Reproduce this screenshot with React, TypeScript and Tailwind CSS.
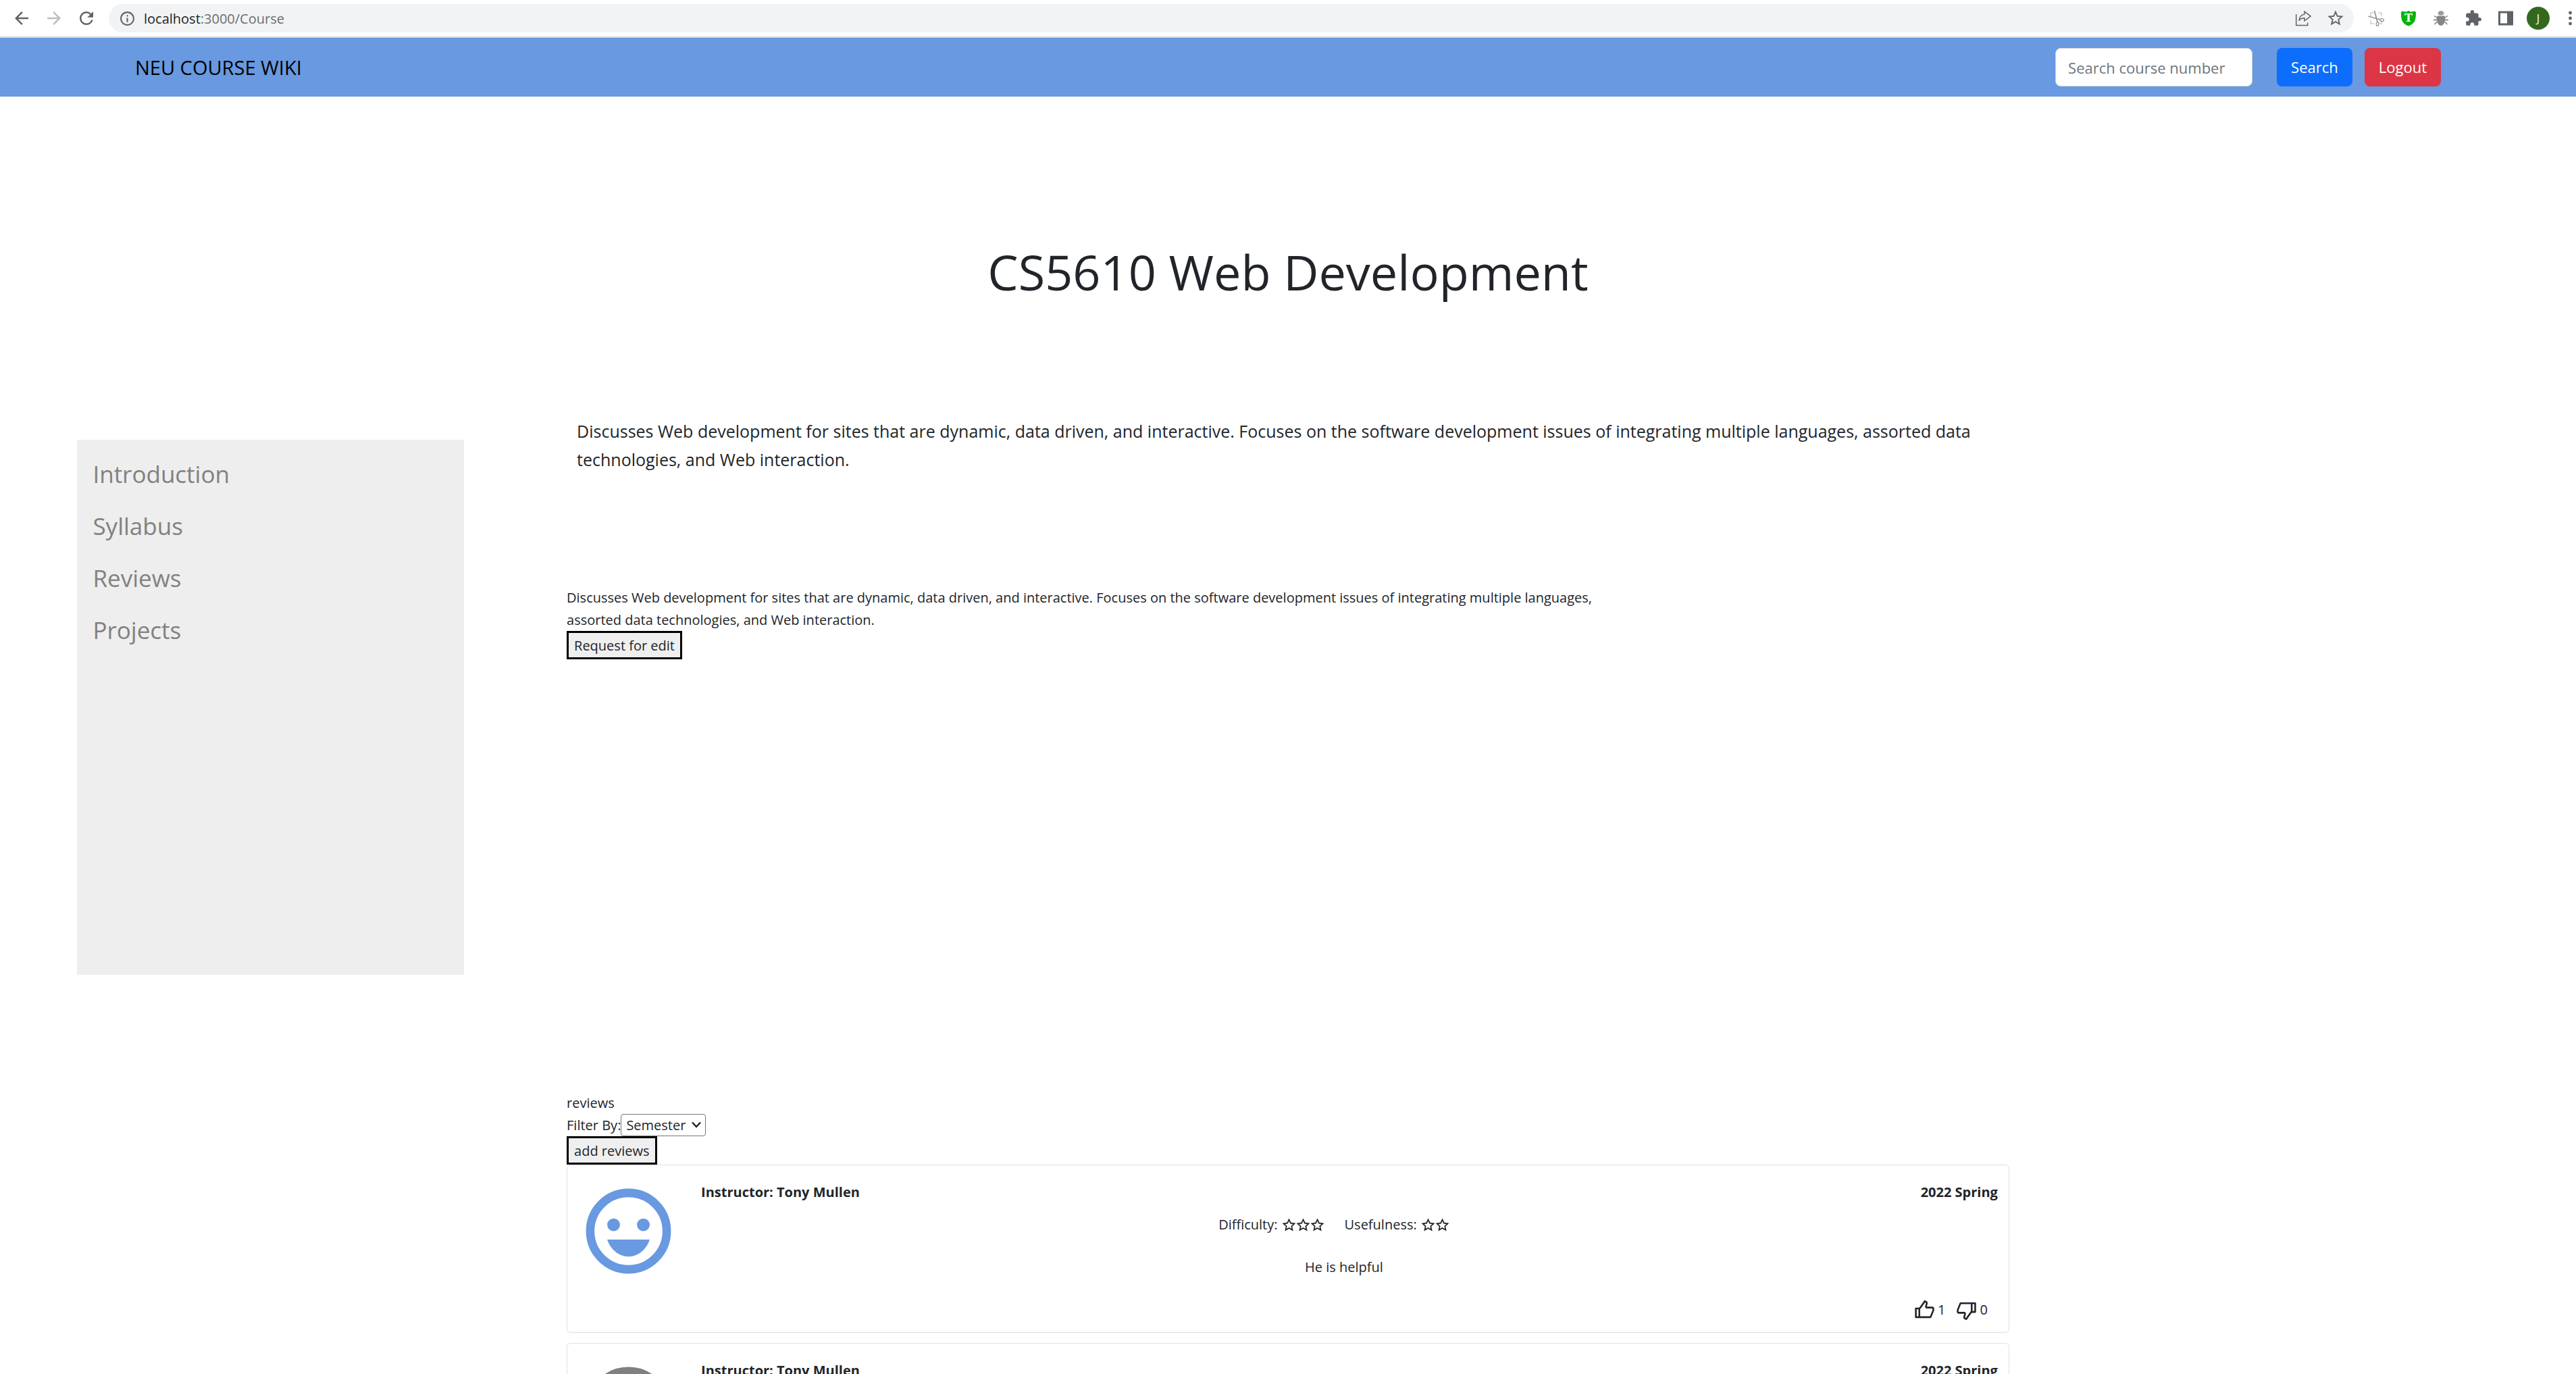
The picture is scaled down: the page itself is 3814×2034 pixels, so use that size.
import type { ReactNode } from "react";
import { MdArrowBack, MdArrowForward, MdExtension, MdInfoOutline, MdRefresh, MdStarBorder } from "react-icons/md";
import { RiStarLine, RiThumbDownLine, RiThumbUpLine } from "react-icons/ri";

type Review = {
  instructor: string;
  semester: string;
  difficulty: number;
  usefulness: number;
  comment: string;
  likes: number;
  dislikes: number;
  faceClass: string;
};

const reviews: Review[] = [
  {
    instructor: "Tony Mullen",
    semester: "2022 Spring",
    difficulty: 3,
    usefulness: 2,
    comment: "He is helpful",
    likes: 1,
    dislikes: 0,
    faceClass: "text-[#6899e1]",
  },
  {
    instructor: "Tony Mullen",
    semester: "2022 Spring",
    difficulty: 3,
    usefulness: 2,
    comment: "He is helpful",
    likes: 0,
    dislikes: 0,
    faceClass: "text-[#808080]",
  },
];

const sections = ["Introduction", "Syllabus", "Reviews", "Projects"];

const description =
  "Discusses Web development for sites that are dynamic, data driven, and interactive. Focuses on the software development issues of integrating multiple languages, assorted data technologies, and Web interaction.";

function ToolButton({ label, children }: { label: string; children: ReactNode }) {
  return (
    <button type="button" aria-label={label} className="flex size-[30px] shrink-0 items-center justify-center">
      {children}
    </button>
  );
}

function ShareIcon() {
  return (
    <svg viewBox="0 0 24 24" className="size-6" fill="none" stroke="currentColor" strokeWidth="1.5">
      <path d="M1.700 6v16.500h17v-4" />
      <path d="M14 2.200 23 9l-9 6.800v-4c-3.600 0-6.400 1-8.200 3.700.6-5 3.700-8.600 8.200-9.400z" />
    </svg>
  );
}

function ScissorsIcon() {
  return (
    <svg viewBox="0 0 24 24" className="size-6" fill="none">
      <path d="M4 9V4h5M15 4h5v5M20 15v5h-5M9 20H4v-5" stroke="#cfcfcf" strokeWidth="1.6" />
      <path d="M.5 9 18 14M9.500.8 14 17.500" stroke="#999" strokeWidth="1.8" />
      <ellipse cx="20.500" cy="14.600" rx="2.900" ry="2" stroke="#999" strokeWidth="1.4" transform="rotate(15 20.500 14.600)" />
      <ellipse cx="14" cy="20.500" rx="1.800" ry="2.800" stroke="#999" strokeWidth="1.4" />
    </svg>
  );
}

function ShieldIcon() {
  return (
    <svg viewBox="0 0 24 24" className="size-6">
      <path d="M12 .6c1 1.300 2 1.800 4 1.800 2.500 0 4-.4 5-1.400.4 1 1.200 1.500 2 1.700C23 13 22.500 19.500 12 23.600 1.500 19.500 1 13 1 2.700c.8-.2 1.600-.7 2-1.700 1 1 2.500 1.400 5 1.400 2 0 3-.5 4-1.800z" fill="#08b30d" />
      <text x="12" y="16.500" textAnchor="middle" fontFamily="DejaVu Serif, serif" fontWeight="700" fontSize="16" fill="#fff">
        T
      </text>
    </svg>
  );
}

function BugIcon() {
  return (
    <svg viewBox="0 0 24 24" className="size-6">
      <path d="M6 11 2 8.500M6 14.500H1M6 17.500 2.500 21M18 11l4-2.500M18 14.500h5M18 17.500l3.500 3.500" stroke="#777" strokeWidth="1.300" fill="none" />
      <path d="M7.500 5.500a4.500 4.500 0 0 1 9 0L14.500 7.500h-5z" fill="#9a9a9a" />
      <path d="M6.500 8.500h11c1.500 3 1.500 13.500-5.500 14.500-7-1-7-11.500-5.500-14.500z" fill="#858585" />
    </svg>
  );
}

function SidePanelIcon() {
  return (
    <svg viewBox="0 0 24 24" className="size-6">
      <path d="M1 1.500h22v21H1z" fill="#5f6368" />
      <path d="M4 4.500h10v15H4z" fill="#fff" />
    </svg>
  );
}

function BrowserBar() {
  return (
    <div className="flex h-14 items-center gap-[18px] border-b-2 border-[#d5d8dc] bg-white pl-[17px] text-[#5f6368]">
      <ToolButton label="Back">
        <MdArrowBack className="size-[30px]" />
      </ToolButton>
      <button type="button" disabled aria-label="Forward" className="flex size-[30px] shrink-0 items-center justify-center text-[#bcbec1]">
        <MdArrowForward className="size-[30px]" />
      </button>
      <ToolButton label="Reload">
        <MdRefresh className="size-[30px]" />
      </ToolButton>
      <div className="flex h-[42px] min-w-0 flex-1 items-center gap-[18px] rounded-full bg-[#f1f3f4] pr-3 pl-[15px]">
        <MdInfoOutline className="-mr-1.5 size-[25px] shrink-0" />
        <p className="flex-1 text-[20px] text-[#6b6e72]">
          <span className="text-[#202124]">localhost</span>:3000/Course
        </p>
        <ToolButton label="Share">
          <ShareIcon />
        </ToolButton>
        <ToolButton label="Bookmark">
          <MdStarBorder className="size-[28px]" />
        </ToolButton>
      </div>
      <ToolButton label="Screenshot">
        <ScissorsIcon />
      </ToolButton>
      <ToolButton label="Shield">
        <ShieldIcon />
      </ToolButton>
      <ToolButton label="Debugger">
        <BugIcon />
      </ToolButton>
      <ToolButton label="Extensions">
        <MdExtension className="size-[26px]" />
      </ToolButton>
      <ToolButton label="Side panel">
        <SidePanelIcon />
      </ToolButton>
      <div className="-ml-0.5 flex shrink-0 items-center gap-4">
        <button type="button" className="size-[34px] rounded-full bg-[#33691e] text-[16px] text-white">
          J
        </button>
        <button type="button" aria-label="Menu">
          <svg viewBox="0 0 23 30" className="h-[30px] w-[23px]" fill="currentColor">
            <circle cx="14.500" cy="7" r="2.400" />
            <circle cx="14.500" cy="15" r="2.400" />
            <circle cx="14.500" cy="23" r="2.400" />
          </svg>
        </button>
      </div>
    </div>
  );
}

function NavBar() {
  return (
    <header className="flex items-center bg-[#6899e1] px-[200px] py-[15px]">
      <a href="#home" className="mr-auto text-[29px] text-black">
        NEU COURSE WIKI
      </a>
      <form className="flex text-[22px]" onSubmit={(e) => e.preventDefault()}>
        <input
          type="text"
          aria-label="Search course number"
          placeholder="Search course number"
          className="mr-9 h-[57px] w-[292px] rounded-lg border border-[#ced4da] bg-white px-[18px] placeholder:text-[#6c757d]"
        />
        <button type="submit" className="mr-[18px] h-[57px] rounded-lg bg-[#0d6efd] px-[21px] text-white">
          Search
        </button>
        <button type="button" className="h-[57px] rounded-lg bg-[#dc3545] px-[21px] text-white">
          Logout
        </button>
      </form>
    </header>
  );
}

function Face({ className }: { className: string }) {
  return (
    <svg viewBox="0 0 24 24" className={`size-[151px] shrink-0 ${className}`} fill="currentColor" aria-hidden="true">
      <circle cx="12" cy="12" r="9" fill="none" stroke="currentColor" strokeWidth="2" />
      <circle cx="8.500" cy="10.500" r="1.500" />
      <circle cx="15.500" cy="10.500" r="1.500" />
      <path d="M12 18c2.280 0 4.220-1.660 5-4H7c.780 2.340 2.720 4 5 4z" />
    </svg>
  );
}

function Rating({ label, value }: { label: string; value: number }) {
  return (
    <div className="mr-[30px] flex items-center gap-1.5">
      <span>{label}:</span>
      <span className="flex" role="img" aria-label={`${value} stars`}>
        {Array.from({ length: value }, (_, i) => (
          <RiStarLine key={i} className="size-[21px]" />
        ))}
      </span>
    </div>
  );
}

function ReviewCard({ review }: { review: Review }) {
  return (
    <article className="mb-[15px] flex rounded-md border border-[#dfdfdf] bg-white pt-[22px] pr-4 pb-[15px] pl-[15px] leading-[36px]">
      <Face className={review.faceClass} />
      <div className="ml-4 flex-1">
        <div className="flex justify-between pl-4 font-bold">
          <h3>Instructor: {review.instructor}</h3>
          <p>{review.semester}</p>
        </div>
        <div className="mt-3 flex justify-center">
          <Rating label="Difficulty" value={review.difficulty} />
          <Rating label="Usefulness" value={review.usefulness} />
        </div>
        <p className="mt-[27px] text-center">{review.comment}</p>
        <div className="mt-[27px] flex justify-end gap-4 pr-[15px]">
          <button type="button" aria-label="Like" className="flex items-center gap-1">
            <RiThumbUpLine className="size-[31px]" />
            {review.likes}
          </button>
          <button type="button" aria-label="Dislike" className="flex items-center gap-1">
            <RiThumbDownLine className="size-[31px]" />
            {review.dislikes}
          </button>
        </div>
      </div>
    </article>
  );
}

export default function App() {
  return (
    <div className="h-screen overflow-hidden bg-white font-['Open_Sans','Noto_Sans',sans-serif] text-[20px] leading-[33px] text-[#212529]">
      <BrowserBar />
      <NavBar />
      <h1 className="mt-[214px] text-center text-[72px] leading-[90px]">CS5610 Web Development</h1>
      <div className="mt-[170px] flex items-start">
        <nav className="mt-[34px] ml-[3%] min-h-[792px] w-[15%] bg-[#eee] pt-3 pl-[23px]">
          {sections.map((name) => (
            <a key={name} href={`#${name.toLowerCase()}`} className="block text-[35px] leading-[77px] text-[#818181]">
              {name}
            </a>
          ))}
        </nav>
        <main className="ml-[4%] w-[56%]">
          <p className="px-[15px] text-[25px] leading-[42px]">{description}</p>
          <p className="mt-[167px] w-[72%]">{description}</p>
          <button type="button" className="block h-[42px] border-3 border-black bg-[#efefef] px-2">
            Request for edit
          </button>
          <h2 className="mt-[640px]">reviews</h2>
          <div className="flex items-center">
            <label htmlFor="filter">Filter By:</label>
            <div className="relative">
              <select
                id="filter"
                className="block h-[33px] w-[126px] appearance-none rounded-sm border border-[#767676] bg-white pl-[7px] leading-[31px]"
              >
                <option>Semester</option>
              </select>
              <svg viewBox="0 0 14 10" className="pointer-events-none absolute top-[11px] right-[7px] h-2.5 w-3.5" fill="none" stroke="#212529" strokeWidth="2.500">
                <path d="m1 1.500 6 6.500 6-6.500" />
              </svg>
            </div>
          </div>
          <button type="button" className="block h-[42px] border-3 border-black bg-[#efefef] px-2">
            add reviews
          </button>
          {reviews.map((review, i) => (
            <ReviewCard key={i} review={review} />
          ))}
        </main>
      </div>
    </div>
  );
}
